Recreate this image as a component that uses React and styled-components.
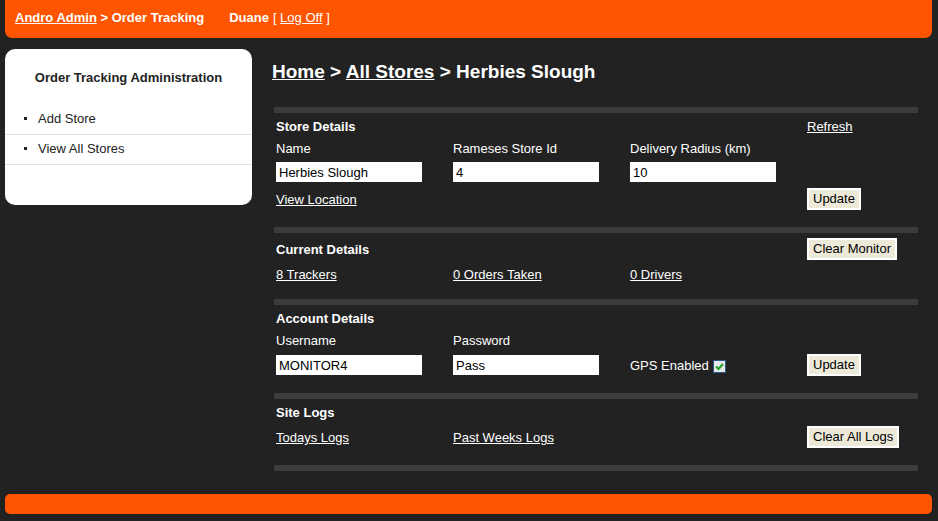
import React from 'react'
import styled, { createGlobalStyle } from 'styled-components'

const GlobalStyle = createGlobalStyle`
  body {
    margin: 0;
    background: #222222;
    font-family: "Liberation Sans", Arial, sans-serif;
    font-size: 13px;
    color: #ffffff;
  }
`

const Header = styled.div`
  margin: 0 6px 0 5px;
  height: 38px;
  box-sizing: border-box;
  padding: 10px 10px 0;
  background: #ff5500;
  border-radius: 0 0 7px 7px;
  display: flex;
  align-items: flex-start;
  line-height: 16px;
  font-weight: bold;
`

const HeaderTitle = styled.span`
  margin-right: 25px;
  a { color: #fff; }
`

const LogOff = styled.span`
  font-weight: normal;
  margin-left: 4px;
  a { color: #fff; }
`

const Body = styled.div`
  display: flex;
  align-items: flex-start;
  gap: 20px;
  margin-top: 11px;
  padding-left: 5px;
`

const Sidebar = styled.div`
  width: 247px;
  height: 156px;
  box-sizing: border-box;
  padding-top: 21px;
  background: #ffffff;
  border-radius: 10px;
  color: #222;
`

const SideTitle = styled.div`
  text-align: center;
  font-weight: bold;
  line-height: 16px;
  margin-bottom: 19px;
`

const SideList = styled.ul`
  list-style: none;
  margin: 0;
  padding: 0;
`

const SideItem = styled.li`
  position: relative;
  padding: 6px 0 8px 33px;
  line-height: 15px;
  border-bottom: 1px solid #e2e2e2;
  &::before {
    content: '';
    position: absolute;
    left: 19px;
    top: 12px;
    width: 3px;
    height: 3px;
    background: #222;
  }
`

const Main = styled.div`
  flex: 0 0 646px;
`

const Crumbs = styled.h1`
  margin: 12px 0 24px;
  font-size: 19px;
  line-height: 22px;
  font-weight: bold;
  a { color: #fff; }
`

const Panel = styled.div`
  margin-left: 2px;
  width: 644px;
`

const Bar = styled.div`
  height: 6px;
  background: #3c3c3c;
`

const Section = styled.div`
  display: grid;
  grid-template-columns: 177px 177px 177px 1fr;
  grid-auto-rows: minmax(20px, auto);
  row-gap: 2px;
  align-items: center;
  padding: 3px 0 15px 2px;
`

const Title = styled.div`
  font-weight: bold;
  line-height: 16px;
  padding-top: 2px;
  grid-column: ${p => p.span ? '1 / 4' : 'auto'};
`

const Label = styled.div`
  line-height: 16px;
  padding-top: 2px;
  display: flex;
  align-items: center;
  gap: 4px;
`

const Link = styled.a`
  color: #fff;
  text-decoration: underline;
  line-height: 16px;
  padding-top: 2px;
  justify-self: start;
`

const Input = styled.input`
  width: 146px;
  height: 20px;
  box-sizing: border-box;
  margin: 2px 0;
  padding: 0 3px;
  border: 0;
  background: #fff;
  color: #000;
  font-family: "Liberation Sans", Arial, sans-serif;
  font-size: 13px;
`

const Button = styled.button`
  justify-self: start;
  height: 22px;
  margin: 2px 0;
  padding: 0 4px;
  box-sizing: border-box;
  border: 2px solid #fff;
  background: #ece9d8;
  color: #000;
  font-family: "Liberation Sans", Arial, sans-serif;
  font-size: 13px;
  line-height: 16px;
`

const Footer = styled.div`
  margin: 23px 6px 0 5px;
  height: 20px;
  background: #ff5500;
  border-radius: 5px;
`

const Check = () => (
  <svg width="13" height="13" viewBox="0 0 13 13">
    <rect x="0.5" y="0.5" width="12" height="12" fill="#e6e8ea" stroke="#2a5a8a" />
    <path d="M3 6.5 L5.5 9 L10 4" fill="none" stroke="#21a121" strokeWidth="2" />
  </svg>
)

const Empty = () => <div />

export default function App() {
  return (
    <>
      <GlobalStyle />
      <Header>
        <HeaderTitle><a href="#">Andro Admin</a> &gt; Order Tracking</HeaderTitle>
        <span>Duane</span>
        <LogOff>[ <a href="#">Log Off</a> ]</LogOff>
      </Header>
      <Body>
        <Sidebar>
          <SideTitle>Order Tracking Administration</SideTitle>
          <SideList>
            <SideItem>Add Store</SideItem>
            <SideItem>View All Stores</SideItem>
          </SideList>
        </Sidebar>
        <Main>
          <Crumbs><a href="#">Home</a> &gt; <a href="#">All Stores</a> &gt; Herbies Slough</Crumbs>
          <Panel>
            <Bar />
            <Section>
              <Title span>Store Details</Title>
              <Link href="#">Refresh</Link>
              <Label>Name</Label>
              <Label>Rameses Store Id</Label>
              <Label>Delivery Radius (km)</Label>
              <Empty />
              <Input defaultValue="Herbies Slough" />
              <Input defaultValue="4" />
              <Input defaultValue="10" />
              <Empty />
              <Link href="#">View Location</Link>
              <Empty />
              <Empty />
              <Button>Update</Button>
            </Section>
            <Bar />
            <Section>
              <Title span>Current Details</Title>
              <Button>Clear Monitor</Button>
              <Link href="#">8 Trackers</Link>
              <Link href="#">0 Orders Taken</Link>
              <Link href="#">0 Drivers</Link>
            </Section>
            <Bar />
            <Section>
              <Title span>Account Details</Title>
              <Empty />
              <Label>Username</Label>
              <Label>Password</Label>
              <Empty />
              <Empty />
              <Input defaultValue="MONITOR4" />
              <Input defaultValue="Pass" />
              <Label>GPS Enabled <Check /></Label>
              <Button>Update</Button>
            </Section>
            <Bar />
            <Section>
              <Title span>Site Logs</Title>
              <Empty />
              <Link href="#">Todays Logs</Link>
              <Link href="#">Past Weeks Logs</Link>
              <Empty />
              <Button>Clear All Logs</Button>
            </Section>
            <Bar />
          </Panel>
        </Main>
      </Body>
      <Footer />
    </>
  )
}
